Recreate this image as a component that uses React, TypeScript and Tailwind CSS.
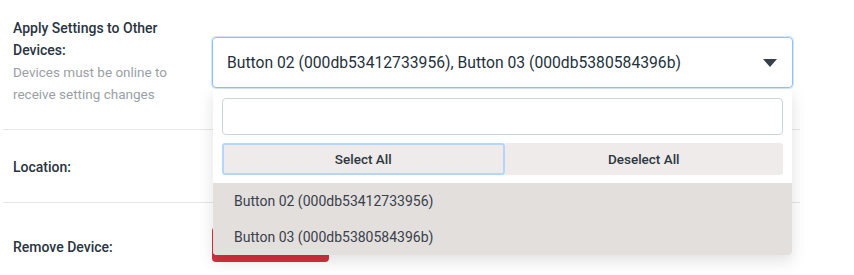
import React from 'react';

const items = ['Button 02 (000db53412733956)', 'Button 03 (000db5380584396b)'];

export default function App() {
  return (
    <div className="w-[854px] h-[275px] overflow-hidden bg-white font-['Roboto',sans-serif] text-[#2f3a45]">
      <div className="w-[800px] pl-[3px]">
        {/* Apply settings row */}
        <div className="flex h-[130px] border-b border-[#e6e6e6]">
          <div className="w-[209px] pl-[10px] pt-[17px] leading-[22px]">
            <div className="text-[14px] font-medium text-[#2a3440]">Apply Settings to Other Devices:</div>
            <div className="text-[13.5px] text-[#9a9fa6]">Devices must be online to receive setting changes</div>
          </div>
          <div className="relative pt-[37px]">
            <div className="flex h-[51px] w-[581px] items-center justify-between rounded-[4px] border border-[#8fc1f7] pl-[14px] pr-[14px] shadow-[0_0_0_1px_#d3e6fb]">
              <span className="text-[15.7px] text-[#26313c]">Button 02 (000db53412733956), Button 03 (000db5380584396b)</span>
              <svg width="14" height="8" viewBox="0 0 14 8" className="mr-[1px]">
                <path d="M0 0 H14 L7 8 Z" fill="#36404a" />
              </svg>
            </div>
            {/* dropdown */}
            <div className="absolute left-[1px] top-[89px] z-10 w-[579px] rounded-b-[4px] bg-white shadow-[0_6px_16px_rgba(0,0,0,0.12)]">
              <div className="px-[9px] pt-[9px]">
                <div className="h-[37px] rounded-[4px] border border-[#cfd3da] bg-white" />
                <div className="mt-[8px] flex h-[32px] text-[13.5px] text-[#2d3843]">
                  <button className="flex-1 rounded-[3px] border-2 border-[#b5d6f8] bg-[#efebea] font-medium">Select All</button>
                  <button className="flex-1 rounded-r-[3px] bg-[#efebea] font-medium">Deselect All</button>
                </div>
              </div>
              <div className="mt-[8px] rounded-b-[4px] bg-[#e3dfdd]">
                {items.map((it) => (
                  <div key={it} className="flex h-[36px] items-center pl-[21px] text-[14px] text-[#39414b]">{it}</div>
                ))}
              </div>
            </div>
          </div>
        </div>
        {/* Location row */}
        <div className="flex h-[73px] items-center border-b border-[#e6e6e6] pt-[2px]">
          <div className="pl-[10px] text-[14px] font-medium text-[#2a3440]">Location:</div>
        </div>
        {/* Remove row */}
        <div className="flex">
          <div className="w-[209px] pl-[10px] pt-[34px] text-[14px] font-medium text-[#2a3440]">Remove Device:</div>
          <div className="pt-[24px]">
            <div className="h-[35px] w-[117px] rounded-[4px] bg-[#d4303f]" />
          </div>
        </div>
      </div>
    </div>
  );
}
